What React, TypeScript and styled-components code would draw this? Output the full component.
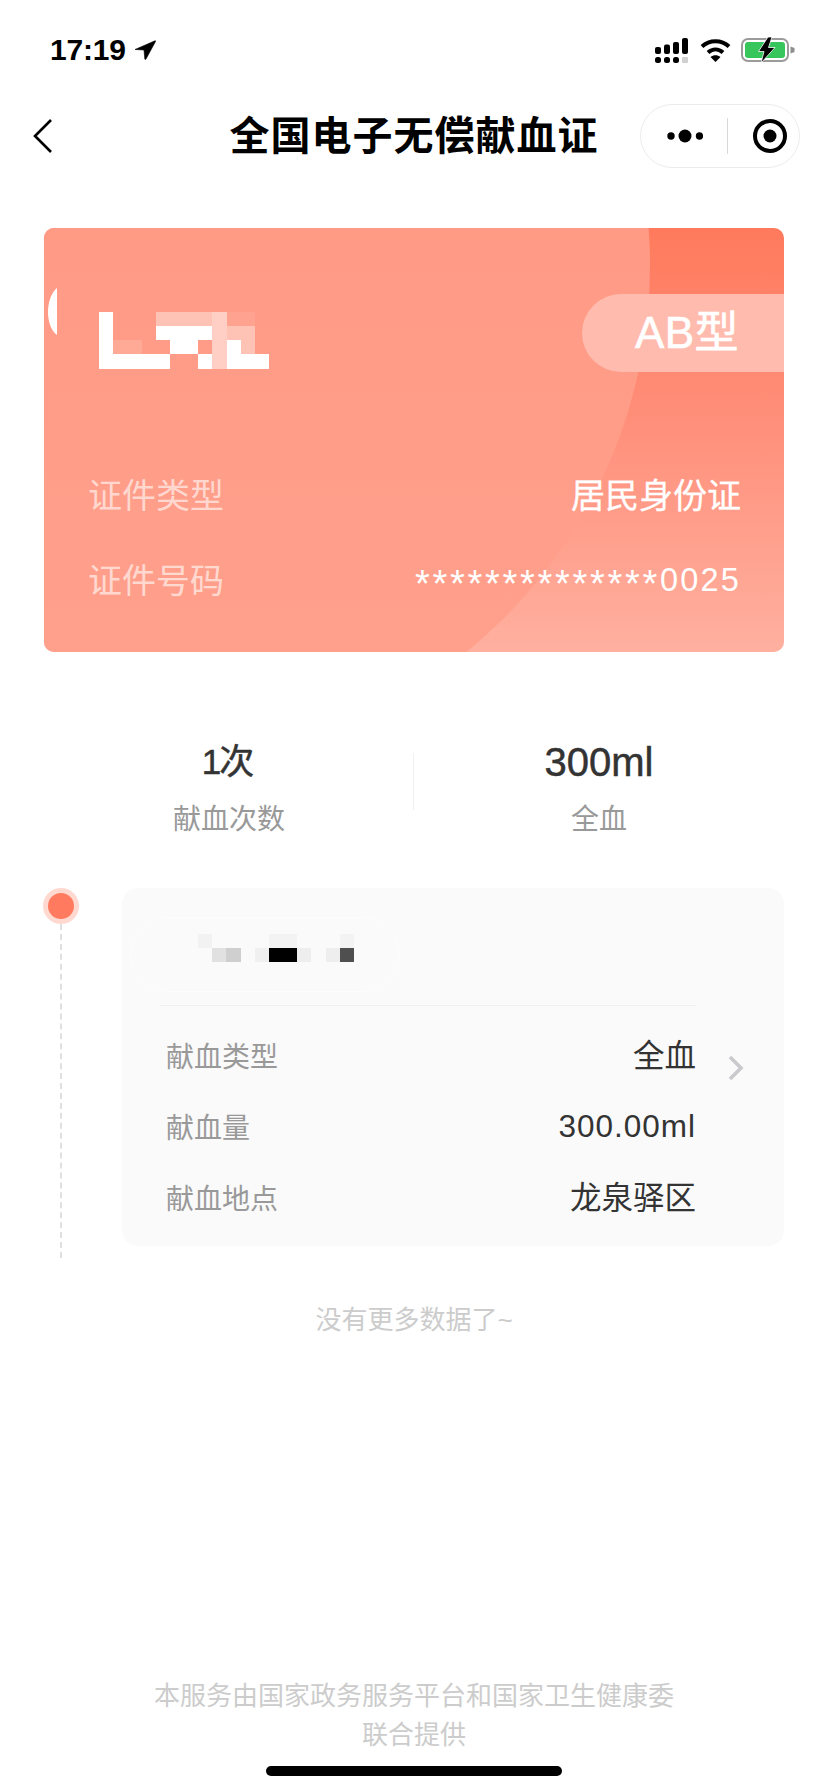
import React from "react";
import styled, { createGlobalStyle } from "styled-components";

const Global = createGlobalStyle`
  html, body { margin: 0; padding: 0; background: #fff; }
  body { font-family: "Liberation Sans", "Noto Sans CJK SC", sans-serif; }
  * { box-sizing: border-box; }
  svg { flex: none; }
`;

const Page = styled.div`
  position: relative;
  width: 828px;
  height: 1792px;
  overflow: hidden;
  display: flex;
  flex-direction: column;
  background: #fff;
`;

const StatusBar = styled.div`
  height: 104px;
  padding: 32px 33px 0 50px;
  display: flex;
  justify-content: space-between;
  align-items: flex-start;
`;
const Clock = styled.div`
  display: flex;
  align-items: center;
  gap: 8px;
  height: 36px;
  font-size: 30px;
  font-weight: 700;
  letter-spacing: -0.2px;
  color: #000;
`;
const StatusIcons = styled.div`
  display: flex;
  align-items: center;
  height: 36px;
`;
const SignalGap = styled.div`
  width: 12px;
`;
const WifiGap = styled.div`
  width: 10px;
`;

const Nav = styled.div`
  display: grid;
  grid-template-columns: 1fr auto 1fr;
  align-items: center;
  height: 64px;
  padding: 0 28px 0 32px;
`;
const Title = styled.div`
  margin-right: 4px;
  font-size: 40px;
  line-height: 64px;
  font-weight: 700;
  letter-spacing: 1px;
  color: #000;
`;
const Capsule = styled.div`
  justify-self: end;
  width: 160px;
  height: 64px;
  border: 1px solid #ececec;
  border-radius: 32px;
  display: flex;
  align-items: center;
  padding-left: 26px;
`;
const CapsuleRule = styled.div`
  flex: none;
  width: 1px;
  height: 36px;
  background: #d8d8d8;
  margin: 0 24px;
`;

const Card = styled.div`
  position: relative;
  overflow: hidden;
  margin: 60px 44px 0;
  height: 424px;
  border-radius: 10px;
  background: linear-gradient(180deg, #ff7a5d 0%, #ff8c76 40%, #ffb0a0 100%);
  color: #fff;
`;
const CardArc = styled.div`
  position: absolute;
  left: -394px;
  top: -463px;
  width: 1000px;
  height: 1000px;
  border-radius: 50%;
  background: linear-gradient(180deg, #ff9a85 46%, #ffa08c 89%);
`;
const CardBody = styled.div`
  position: relative;
  display: flex;
  flex-direction: column;
  height: 100%;
  padding: 60px 0 0 4px;
`;
const CardTop = styled.div`
  display: flex;
  justify-content: space-between;
  align-items: flex-start;
  height: 183px;
`;
const BloodPill = styled.div`
  width: 202px;
  height: 78px;
  margin-top: 6px;
  border-radius: 39px 0 0 39px;
  background: #ffbcae;
  padding-left: 53px;
  font-size: 44px;
  letter-spacing: 0.4px;
  line-height: 78px;
  -webkit-text-stroke: 0.6px #fff;
`;
const CardRow = styled.div`
  display: flex;
  justify-content: space-between;
  align-items: center;
  height: 44px;
  margin-bottom: 41px;
  padding: 0 43px 0 40px;
`;
const CardLabel = styled.span`
  color: rgba(255, 255, 255, 0.62);
  font-size: 34px;
`;
const CardValue = styled.span<{ $latin?: boolean }>`
  font-size: ${(p) => (p.$latin ? "32.5px" : "34px")};
  letter-spacing: ${(p) => (p.$latin ? "2.2px" : "0")};
  padding-top: ${(p) => (p.$latin ? "4px" : "0")};
  -webkit-text-stroke: ${(p) => (p.$latin ? "0" : "0.3px #fff")};
`;
const Mask = styled.span`
  font-size: 38px;
  letter-spacing: 2.7px;
  vertical-align: -6px;
  line-height: 30px;
`;

const Stats = styled.div`
  display: grid;
  grid-template-columns: 1fr 1fr;
  margin: 88px 44px 0;
  height: 92px;
  position: relative;
`;
const StatRule = styled.div`
  position: absolute;
  left: 369px;
  top: 13px;
  width: 1px;
  height: 57px;
  background: #f1f1f1;
`;
const Stat = styled.div`
  display: flex;
  flex-direction: column;
  align-items: center;
`;
const StatValue = styled.div<{ $cjk?: boolean }>`
  font-size: ${(p) => (p.$cjk ? "35px" : "40px")};
  letter-spacing: ${(p) => (p.$cjk ? "-2px" : "0")};
  margin-right: ${(p) => (p.$cjk ? "4px" : "0")};
  line-height: 44px;
  color: #333;
  -webkit-text-stroke: 0.5px #333;
`;
const StatLabel = styled.div`
  margin-top: 18px;
  font-size: 28px;
  line-height: 36px;
  color: #999;
`;

const Timeline = styled.div`
  display: flex;
  margin: 56px 44px 0 43px;
`;
const Rail = styled.div`
  width: 36px;
  margin-right: 43px;
  display: flex;
  flex-direction: column;
  align-items: center;
`;
const Dot = styled.div`
  flex: none;
  width: 36px;
  height: 36px;
  border-radius: 50%;
  background: #ffd9d0;
  display: flex;
  align-items: center;
  justify-content: center;
  &::after {
    content: "";
    width: 26px;
    height: 26px;
    border-radius: 50%;
    background: #ff7a5e;
  }
`;
const RailLine = styled.div`
  width: 0;
  height: 334px;
  border-left: 2px dashed #e0e0e0;
`;
const Record = styled.div`
  flex: 1;
  height: 358px;
  padding: 0 0 0 38px;
  border-radius: 16px;
  background: #fafafa;
  position: relative;
`;
const Smudge = styled.div`
  position: absolute;
  left: 8px;
  top: 29px;
  width: 270px;
  height: 75px;
  border-radius: 38px;
  border: 1px solid #fdfdfd;
`;
const RecordHead = styled.div`
  position: relative;
  height: 118px;
  width: 536px;
  border-bottom: 1px solid #f0f0f0;
  padding: 46px 0 0 38px;
`;
const RecordRows = styled.div`
  display: flex;
  flex-direction: column;
  padding-top: 13px;
  width: 536px;
`;
const RecordRow = styled.div`
  display: flex;
  justify-content: space-between;
  align-items: center;
  height: 71px;
  padding-left: 6px;
`;
const RecordLabel = styled.span`
  font-size: 28px;
  color: #999;
`;
const RecordValue = styled.span<{ $latin?: boolean }>`
  font-size: 31.5px;
  letter-spacing: ${(p) => (p.$latin ? "1px" : "0")};
  padding: ${(p) => (p.$latin ? "2px 0 0" : "0 0 3px")};
  color: #333;
`;
const Chevron = styled.div`
  position: absolute;
  left: 604px;
  top: 167px;
  width: 20px;
  height: 26px;
`;

const NoMore = styled.div`
  margin-top: 44px;
  text-align: center;
  font-size: 26px;
  line-height: 36px;
  color: #ccc;
`;

const Footer = styled.div`
  margin-top: auto;
  padding: 0 0 37px;
  text-align: center;
  font-size: 26px;
  line-height: 39px;
  color: #ccc;
`;
const HomeBar = styled.div`
  position: absolute;
  left: 266px;
  top: 1766px;
  width: 296px;
  height: 10px;
  border-radius: 5px;
  background: #000;
`;

type Cell = [number, number, string];

const Mosaic = ({ cells, width, height, size, extra }: { cells: Cell[]; width: number; height: number; size: number; extra?: React.ReactNode }) => (
  <svg width={width} height={height} viewBox={`0 0 ${width} ${height}`} style={{ display: "block" }}>
    {extra}
    <g shapeRendering="crispEdges">
      {cells.map(([c, r, f], i) => (
        <rect key={i} x={c * size} y={r * size} width={size} height={size} fill={f} />
      ))}
    </g>
  </svg>
);

const W = "#ffffff";
const L = "#ffc3b6";
const P = "#ffcfc5";
const S = "#ffa997";
const nameCells: Cell[] = [
  [0, 0, W], [0, 1, W], [0, 2, W], [0, 3, W],
  [1, 2, S], [2, 2, S],
  [1, 3, W], [2, 3, W], [3, 3, W], [4, 3, W],
  [4, 0, L], [5, 0, L], [6, 0, L], [7, 0, L], [8, 0, P], [9, 0, "#ffa28f"], [10, 0, "#ffa28f"],
  [4, 1, W], [5, 1, W], [6, 1, W], [7, 1, W], [8, 1, P], [9, 1, L], [10, 1, L],
  [5, 2, W], [6, 2, W], [8, 2, P], [9, 2, W], [10, 2, L],
  [7, 3, W], [8, 3, P], [9, 3, W], [10, 3, W], [11, 3, W],
];
const placeCells: Cell[] = [
  [0, 0, "#f2f2f2"], [5, 0, "#f3f3f3"], [6, 0, "#f3f3f3"], [10, 0, "#f3f3f3"],
  [1, 1, "#e1e1e1"], [2, 1, "#cfcfcf"], [4, 1, "#f0f0f0"], [5, 1, "#000"], [6, 1, "#000"],
  [7, 1, "#eeeeee"], [9, 1, "#eeeeee"], [10, 1, "#4f4f4f"],
];

export default function App() {
  return (
    <Page>
      <Global />
      <StatusBar>
        <Clock>
          17:19
          <svg width="22" height="20" viewBox="0 0 22 20">
            <path d="M1 9.500 L21 .8 Q22 .5 21.500 1.500 L12 19 Q11 20 10.800 19 L10 10 Z" fill="#000" stroke="#000" strokeWidth="0.6" />
          </svg>
        </Clock>
        <StatusIcons>
          <svg width="33" height="25" viewBox="0 0 33 25">
            <g fill="#000">
              <rect x="0" y="9" width="6" height="7" rx="2" />
              <rect x="9" y="6.500" width="6" height="9.500" rx="2" />
              <rect x="18" y="4" width="6" height="12" rx="2" />
              <rect x="27" y="0" width="6" height="16" rx="2" />
              <rect x="0" y="19" width="6" height="6" rx="2.500" />
              <rect x="9" y="19" width="6" height="6" rx="2.500" />
              <rect x="18" y="19" width="6" height="6" rx="2.500" />
            </g>
            <rect x="27" y="19" width="6" height="6" rx="1" fill="#d0d0d0" />
          </svg>
          <SignalGap />
          <svg width="31" height="24" viewBox="0 0 31 24">
            <path d="M2 8.500 C9.500 1.500 21.500 1.500 29 8.500" fill="none" stroke="#000" strokeWidth="4" />
            <path d="M8 14.500 C12.500 10.500 18.500 10.500 23 14.500" fill="none" stroke="#000" strokeWidth="4" />
            <path d="M10.500 19 C13.500 16.800 17.500 16.800 20.500 19 L15.500 24 Z" fill="#000" />
          </svg>
          <WifiGap />
          <svg width="54" height="26" viewBox="0 0 54 26">
            <rect x="1" y="2" width="46" height="22" rx="6" fill="#fff" stroke="#9b9b9b" strokeWidth="2" />
            <rect x="4" y="5" width="40" height="16" rx="3" fill="#36c65c" />
            <path d="M49.500 9.500 L53.500 11 V15 L49.500 16.500 Z" fill="#8d8d8d" />
            <path d="M27 0 L17.500 14.500 H23 L20 26 L34 10.500 H27.500 L31 0 Z" fill="#000" stroke="#fff" strokeWidth="0.8" />
          </svg>
        </StatusIcons>
      </StatusBar>

      <Nav>
        <svg width="22" height="36" viewBox="0 0 22 36">
          <path d="M19 2 L3 18 L19 34" fill="none" stroke="#000" strokeWidth="2.600" />
        </svg>
        <Title>全国电子无偿献血证</Title>
        <Capsule>
          <svg width="36" height="14" viewBox="0 0 36 14">
            <circle cx="4" cy="7" r="3.700" fill="#000" />
            <circle cx="18" cy="7" r="6.500" fill="#000" />
            <circle cx="32.500" cy="7" r="3.700" fill="#000" />
          </svg>
          <CapsuleRule />
          <svg width="36" height="36" viewBox="0 0 36 36">
            <circle cx="18" cy="18" r="15" fill="none" stroke="#000" strokeWidth="4" />
            <circle cx="18" cy="18" r="6.500" fill="#000" />
          </svg>
        </Capsule>
      </Nav>

      <Card>
        <CardArc />
        <CardBody>
          <CardTop>
            <Mosaic
              width={224}
              height={84}
              size={14.17}
              cells={nameCells.map(([c, r, f]) => [c + 3.6, r + 1.69, f])}
              extra={<path d="M9 0 C-3 10 -3 38 9 47 Z" fill="#fff" />}
            />
            <BloodPill>AB型</BloodPill>
          </CardTop>
          <CardRow>
            <CardLabel>证件类型</CardLabel>
            <CardValue>居民身份证</CardValue>
          </CardRow>
          <CardRow>
            <CardLabel>证件号码</CardLabel>
            <CardValue $latin>
              <Mask>**************</Mask>0025
            </CardValue>
          </CardRow>
        </CardBody>
      </Card>

      <Stats>
        <Stat>
          <StatValue $cjk>1次</StatValue>
          <StatLabel>献血次数</StatLabel>
        </Stat>
        <StatRule />
        <Stat>
          <StatValue>300ml</StatValue>
          <StatLabel>全血</StatLabel>
        </Stat>
      </Stats>

      <Timeline>
        <Rail>
          <Dot />
          <RailLine />
        </Rail>
        <Record>
          <Smudge />
          <RecordHead>
            <Mosaic width={156} height={29} size={14.17} cells={placeCells} />
          </RecordHead>
          <RecordRows>
            <RecordRow>
              <RecordLabel>献血类型</RecordLabel>
              <RecordValue>全血</RecordValue>
            </RecordRow>
            <RecordRow>
              <RecordLabel>献血量</RecordLabel>
              <RecordValue $latin>300.00ml</RecordValue>
            </RecordRow>
            <RecordRow>
              <RecordLabel>献血地点</RecordLabel>
              <RecordValue>龙泉驿区</RecordValue>
            </RecordRow>
          </RecordRows>
          <Chevron>
            <svg width="20" height="26" viewBox="0 0 20 26">
              <path d="M4 2 L15 13 L4 24" fill="none" stroke="#c9c9ce" strokeWidth="3.600" />
            </svg>
          </Chevron>
        </Record>
      </Timeline>

      <NoMore>没有更多数据了~</NoMore>

      <Footer>
        本服务由国家政务服务平台和国家卫生健康委
        <br />
        联合提供
      </Footer>
      <HomeBar />
    </Page>
  );
}
